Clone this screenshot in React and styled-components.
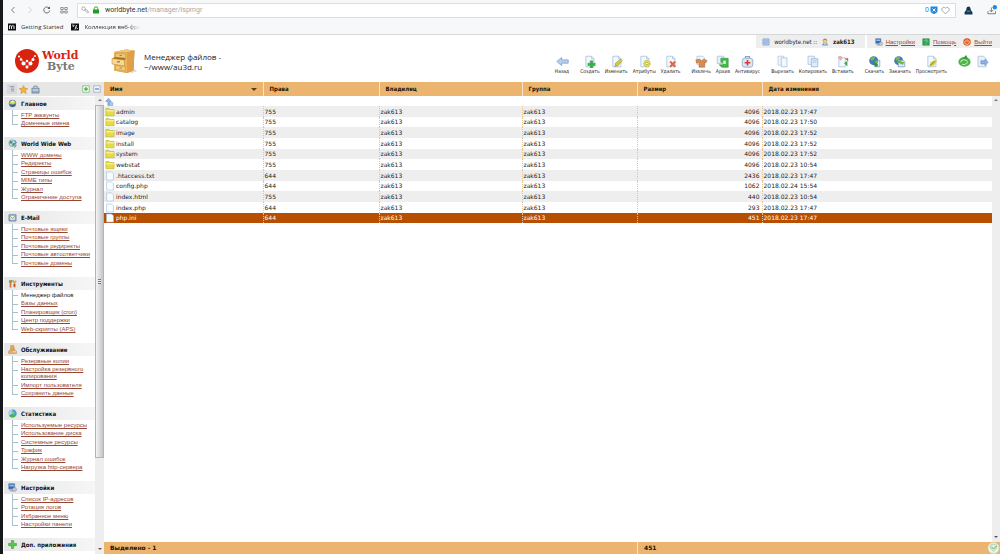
import styled, { createGlobalStyle, css } from 'styled-components'

const groups = [
  { title: 'Главное', icon: 'main', links: ['FTP аккаунты', 'Доменные имена'] },
  {
    title: 'World Wide Web',
    icon: 'web',
    links: ['WWW домены', 'Редиректы', 'Страницы ошибок', 'MIME типы', 'Журнал', 'Ограничение доступа'],
  },
  {
    title: 'E-Mail',
    icon: 'mail',
    links: ['Почтовые ящики', 'Почтовые группы', 'Почтовые редиректы', 'Почтовые автоответчики', 'Почтовые домены'],
  },
  {
    title: 'Инструменты',
    icon: 'tools',
    current: 'Менеджер файлов',
    links: ['Менеджер файлов', 'Базы данных', 'Планировщик (cron)', 'Центр поддержки', 'Web-скрипты (APS)'],
  },
  {
    title: 'Обслуживание',
    icon: 'service',
    links: ['Резервные копии', 'Настройка резервного копирования', 'Импорт пользователя', 'Сохранить данные'],
  },
  {
    title: 'Статистика',
    icon: 'stats',
    links: ['Используемые ресурсы', 'Использование диска', 'Системные ресурсы', 'Трафик', 'Журнал ошибок', 'Нагрузка http-сервера'],
  },
  {
    title: 'Настройки',
    icon: 'settings',
    links: ['Список IP-адресов', 'Ротация логов', 'Избранное меню', 'Настройки панели'],
  },
  { title: 'Доп. приложения', icon: 'plus', links: [] },
]

const actions = [
  [['Назад', 'back']],
  [['Создать', 'create'], ['Изменить', 'edit'], ['Атрибуты', 'attrs'], ['Удалить', 'remove']],
  [['Извлечь', 'extract'], ['Архив', 'archive'], ['Антивирус', 'antivirus']],
  [['Вырезать', 'cut'], ['Копировать', 'copy'], ['Вставить', 'paste']],
  [['Скачать', 'download'], ['Закачать', 'upload'], ['Просмотреть', 'view']],
]

const files = [
  ['folder', 'admin', 755, 4096, '2018.02.23 17:47'],
  ['folder', 'catalog', 755, 4096, '2018.02.23 17:50'],
  ['folder', 'image', 755, 4096, '2018.02.23 17:52'],
  ['folder', 'install', 755, 4096, '2018.02.23 17:52'],
  ['folder', 'system', 755, 4096, '2018.02.23 17:52'],
  ['folder', 'webstat', 755, 4096, '2018.02.23 10:54'],
  ['file', '.htaccess.txt', 644, 2436, '2018.02.23 17:47'],
  ['file', 'config.php', 644, 1062, '2018.02.24 15:54'],
  ['file', 'index.html', 755, 440, '2018.02.23 10:54'],
  ['file', 'index.php', 644, 293, '2018.02.23 17:47'],
  ['file', 'php.ini', 644, 451, '2018.02.23 17:47'],
]

const Sheet = () => (
  <path d="M3.5 1.5h7l3 3v10h-10z M10.5 1.5v3h3" fill="#f3f8fd" stroke="#a9c1dc" />
)

const Monitor = () => (
  <>
    <rect x="1" y="1" width="11" height="10" rx="1" fill="#3a68b8" stroke="#8a9ab4" />
    <path d="M2.5 3h8v3h-8z" fill="#8fc3f3" />
    <path d="M3 12h7v3H3z" fill="#a3acb8" />
    <circle cx="11.5" cy="11.5" r="3.5" fill="#c9cfd6" stroke="#6c87b0" />
    <circle cx="11.5" cy="11.5" r="1.3" fill="#ecc94b" />
  </>
)

const Globe = () => (
  <>
    <circle cx="7" cy="7" r="5.5" fill="#4179bd" />
    <path d="M3 4c2-3 5-2 6-1L7 6 4 7zM8 8l4-2c1 3-1 5-3 6z" fill="#6fbd45" />
  </>
)

const icons = {
  main: (
    <>
      <circle cx="8" cy="8" r="6.5" fill="#587c9f" />
      <path d="M2 8c1-6 10-8 12-1-3 3-8 3-12 1z" fill="#d8cf4a" />
      <path d="M5 4l4-2 2 3-4 2z" fill="#f7f4b8" />
      <path d="M4 12c3 2 7 1 9-2l-4 1z" fill="#2d4962" />
    </>
  ),
  web: (
    <>
      <circle cx="7.5" cy="7.5" r="6" fill="#bcd7ec" stroke="#5f8fb8" />
      <path d="M4 3l5 2-3 4-4-2zM9 7l4 1-3 5-3-2z" fill="#4d9a57" />
      <path d="M12 2l3 5-4 1M11 15l3-2v-3" fill="none" stroke="#3b7fc0" strokeWidth="1.5" />
    </>
  ),
  mail: (
    <>
      <rect x="1.5" y="2.5" width="13" height="12" rx="1" fill="#8ba6cd" stroke="#6582ad" />
      <path d="M4 5h8v7H4z" fill="#e8eef7" />
      <path d="M4 6l4 4 4-4" fill="none" stroke="#7d9c4c" strokeWidth="1.5" />
    </>
  ),
  tools: (
    <>
      <path d="M3 15V7L1 5l3-3 4 1v2L6 7v8z" fill="#c8793a" />
      <path d="M2 2h6v3H2z" fill="#7fa75b" />
      <path d="M10 15V7L8 4l2-3 1 3h2l1-3 1 4-2 2v8z" fill="#d6a63b" />
      <path d="M10 9h3v5h-3z" fill="#c24b34" />
    </>
  ),
  service: (
    <>
      <path d="M5 1h5l2 8H4z" fill="#e9a64a" stroke="#c98f42" />
      <path d="M1 11l4-2h6l4 2v4H1z" fill="#e0b07a" stroke="#bd8c56" />
      <path d="M9 12h5" stroke="#fff" />
    </>
  ),
  stats: (
    <>
      <circle cx="8" cy="8" r="7" fill="#6fb8e4" />
      <path d="M8 8V1a7 7 0 0 0-5 11z" fill="#a5d4ee" />
      <path d="M8 8l-6 4a7 7 0 0 0 11 1z" fill="#4fb04c" />
      <path d="M8 8V1a7 7 0 0 1 5 12z" fill="#4f9ad4" />
      <path d="M8 3l4 3-2 4-3-2z" fill="#7ccf62" />
    </>
  ),
  settings: <Monitor />,
  plus: <path d="M6 1h4v5h5v4h-5v5H6v-5H1V6h5z" fill="#55c848" stroke="#2e9b2a" />,
  back: <path d="M1 8l6-5v3h8v4H7v3z" fill="#b8d0ee" stroke="#7c9fcc" />,
  create: (
    <>
      <Sheet />
      <path d="M9 7h3v3h3v3h-3v3H9v-3H6v-3h3z" fill="#36b441" stroke="#1f8b2e" strokeWidth=".5" />
    </>
  ),
  edit: (
    <>
      <Sheet />
      <path d="M6 14l1-4 6-5 2 2-5 6z" fill="#d4cb3e" stroke="#8f8b28" strokeWidth=".7" />
    </>
  ),
  attrs: (
    <>
      <Sheet />
      <circle cx="11" cy="10.5" r="4" fill="#e4de5c" stroke="#b2ac31" strokeDasharray="2 1" />
      <circle cx="11" cy="10.5" r="1.5" fill="#fff" stroke="#b2ac31" />
    </>
  ),
  remove: (
    <>
      <Sheet />
      <path d="M7.5 8l6.5 6.5M14 8l-6.5 6.5" stroke="#e2653f" strokeWidth="2.5" />
    </>
  ),
  extract: (
    <>
      <path d="M2.5 1.5h7l2 2v8h-9z" fill="#f3f8fd" stroke="#a9c1dc" />
      <path d="M1 6l5-1 2 2 3-2 4 2-2 3-1-1v6H5V9L2 10z" fill="#d98b4f" stroke="#a9622c" strokeWidth=".6" />
    </>
  ),
  archive: (
    <>
      <path d="M1.5 1.5h8v9h-8z" fill="#e6f0fa" stroke="#a9c1dc" />
      <path d="M6 4h9v11H7l-3-3h5V9H6z" fill="#45ba4a" stroke="#278c33" strokeWidth=".7" />
      <path d="M9 7h3v4H9z" fill="#e9f8e6" />
    </>
  ),
  antivirus: (
    <>
      <path d="M5.5 4V2h5v2" fill="none" stroke="#8ba4c7" strokeWidth="1.5" />
      <rect x="1.5" y="4" width="13" height="11" rx="3" fill="#dbe7f5" stroke="#86a3cd" />
      <path d="M7 6h2v2.5h2.5v2H9V13H7v-2.5H4.5v-2H7z" fill="#dd3a2b" />
    </>
  ),
  cut: (
    <>
      <path d="M2.5 1.5h7v11h-7z" fill="#edf4fb" stroke="#b4cbe4" />
      <path d="M6.5 3.5h7v11h-7z" fill="#f3f8fd" stroke="#a9c1dc" />
    </>
  ),
  copy: (
    <>
      <path d="M2.5 1.5h8v10h-8z" fill="#edf4fb" stroke="#a9c1dc" />
      <path d="M6.5 4.5h8v10h-8z" fill="#e1edf9" stroke="#94b3d6" />
      <path d="M8 7h5M8 9h5" stroke="#a9c1dc" />
    </>
  ),
  paste: (
    <>
      <path d="M3.5 3.5h8v11h-8z" fill="#f3f8fd" stroke="#a9c1dc" />
      <path d="M2 3c2-3 5-2 6 0L6 7z" fill="#e6b1a4" />
      <path d="M10 10l4-3v7z" fill="#3cab49" />
      <path d="M11 4h4v4z" fill="#d94e42" />
    </>
  ),
  download: (
    <>
      <path d="M8.5 6.5h6v8h-6z" fill="#e6f0fa" stroke="#86a3cd" />
      <Globe />
      <path d="M7 8l5 3v3H8z" fill="#3c8d44" />
    </>
  ),
  upload: (
    <>
      <Globe />
      <path d="M6.5 6.5h6l2 2v6h-8z" fill="#dbe9f8" stroke="#7c9fcc" />
      <path d="M5 9l4-3 1 2 4 1-2 3z" fill="#74b33d" />
    </>
  ),
  view: (
    <>
      <Sheet />
      <path d="M5 14l2-5 5-3 3 1-4 6z" fill="#d4cb3e" />
      <path d="M6 13l6-5" stroke="#7b8a36" />
    </>
  ),
  refresh: (
    <>
      <ellipse cx="8" cy="8.5" rx="7.5" ry="6" fill="#4bb34a" />
      <path d="M6 4l4-4 2 5z" fill="#2f9a3a" />
      <path d="M3 9c2-4 6-4 9-1M5 11c2 1 5 1 7-2" fill="none" stroke="#bfe9b4" strokeWidth="1.3" />
    </>
  ),
  exit: (
    <>
      <path d="M2.5 1.5h7l3 3v10h-10z" fill="#e6effa" stroke="#a9c1dc" />
      <path d="M6 7h5V5l4 4-4 4v-2H6z" fill="#8fb0e0" stroke="#5681c4" strokeWidth=".6" />
    </>
  ),
  server: (
    <>
      <rect x="1.5" y="1.5" width="13" height="13" rx="1" fill="#a9c3e4" stroke="#86a3cd" />
      <path d="M2 5.5h12M2 9.5h12" stroke="#8dadd8" />
    </>
  ),
  user: (
    <>
      <path d="M2 15c0-4 3-5 6-5s6 1 6 5z" fill="#7e9fce" />
      <circle cx="8" cy="6" r="4" fill="#f3cf9b" stroke="#b08f4c" />
      <path d="M4 5c0-5 8-5 8 0l-4-1z" fill="#b08a3c" />
      <path d="M6.5 10h3L8 14z" fill="#fff" />
    </>
  ),
  help: (
    <>
      <path d="M1.5 1.5h13v13h-13z" fill="#2fa755" stroke="#1f8543" />
      <path d="M5 6c0-3 6-3 6 0 0 2-3 2-3 4M8 12v1.5" fill="none" stroke="#8fdca6" strokeWidth="1.5" />
    </>
  ),
  power: (
    <>
      <circle cx="8" cy="8" r="7.5" fill="#e25a20" />
      <path d="M5 5a4.5 4.5 0 1 0 6 0M8 3v5" fill="none" stroke="#ffe6d6" strokeWidth="1.5" />
    </>
  ),
  folder: (
    <>
      <path d="M1.5 2.5h5l1 1.5h7v10h-13z" fill="#e5dd45" stroke="#b8b033" />
      <path d="M2 6h12" stroke="#f6f3a0" strokeWidth="2" />
    </>
  ),
  file: <path d="M2.5 1.5h8l3 3v10h-11z" fill="#f8fbff" stroke="#a5bfdf" />,
  up: (
    <>
      <path d="M5 15V8H1l5-6 5 6H8v7z" fill="#8db8e6" stroke="#6a95c8" />
      <path d="M8 8h3v2h3v5H8z" fill="#a9c8ea" stroke="#7da2cf" />
    </>
  ),
  tree: <path d="M3 3h9M6 6h6M6 9h6M6 12h6" stroke="#65707c" fill="none" />,
  star: <path d="M8 1l2.2 4.8 5.3.6-4 3.6 1.2 5.3L8 12.6l-4.7 2.7L4.5 10l-4-3.6 5.3-.6z" fill="#f3b43a" stroke="#cf8d20" />,
  home: (
    <>
      <path d="M5 5V2h6v3" fill="none" stroke="#6d8196" strokeWidth="1.5" />
      <path d="M1.5 5.5h13v9h-13z" fill="#8ea3ba" stroke="#6d8196" />
      <path d="M3 7h10v4H3z" fill="#b8cadb" />
    </>
  ),
  expand: (
    <>
      <path d="M1.5 1.5h13v13h-13z" fill="#effbec" stroke="#3fa53c" />
      <path d="M8 4v8M4 8h8" stroke="#2f9a2c" strokeWidth="2" />
    </>
  ),
  collapse: (
    <>
      <path d="M1.5 1.5h13v13h-13z" fill="#f2f5fb" stroke="#6d86ad" />
      <path d="M4 8h8" stroke="#4b6795" strokeWidth="2" />
    </>
  ),
  goBack: <path d="M11 2L5 8l6 6" fill="none" stroke="#555" strokeWidth="1.5" />,
  goNext: <path d="M5 2l6 6-6 6" fill="none" stroke="#c4c6c9" strokeWidth="1.5" />,
  reload: (
    <>
      <path d="M13.5 9A6 6 0 1 1 12 4" fill="none" stroke="#555" strokeWidth="1.7" />
      <path d="M14 1v5H9z" fill="#555" />
    </>
  ),
  grid: <path d="M1.5 3h5v4h-5zM9.5 3h5v4h-5zM1.5 10h5v4h-5zM9.5 10h5v4h-5z" fill="none" stroke="#666" strokeWidth="1.3" />,
  key: (
    <>
      <circle cx="5" cy="5" r="3.5" fill="none" stroke="#888" strokeWidth="1.3" />
      <path d="M7 8l6 6 2-1-1-3-6-4" fill="none" stroke="#888" strokeWidth="1.3" />
    </>
  ),
  lock: (
    <>
      <path d="M4.5 8V5a3.5 3.5 0 0 1 7 0v3" fill="none" stroke="#1ea01e" strokeWidth="1.8" />
      <path d="M2 7h12v8H2z" fill="#1ea01e" />
    </>
  ),
  shield: (
    <>
      <path d="M1 1h14v9c0 3-4 5-7 6-3-1-7-3-7-6z" fill="#2484dc" />
      <path d="M5 5l6 6M11 5l-6 6" stroke="#fff" strokeWidth="2" />
    </>
  ),
  heart: <path d="M8 14L2 8c-2-3 2-8 6-4 4-4 8 1 6 4z" fill="none" stroke="#888" strokeWidth="1.3" />,
  spy: (
    <>
      <path d="M4 7c0-8 8-8 8 0l3 4v4H1v-4z" fill="#173450" />
      <path d="M5 8h6v3H5z" fill="#2c7d8f" />
    </>
  ),
  save: (
    <>
      <path d="M7 4v7M4 8l3 3 3-3M1.5 10v4h12v-4" fill="none" stroke="#666" strokeWidth="1.3" />
      <circle cx="12.5" cy="3.5" r="3.5" fill="#1f8be0" />
    </>
  ),
  medium: (
    <>
      <path d="M0 1h16v14H0z" fill="#111" />
      <path d="M3 12V5M3 6c2-1 4-1 4 1v5M7 7c2-2 5-2 5 0v5" fill="none" stroke="#fff" strokeWidth="1.8" />
    </>
  ),
  opera: (
    <>
      <path d="M0 1h16v14H0z" fill="#111" />
      <path d="M4 3v4l3-2M11 4l-3 9M11 9l2 3" fill="none" stroke="#fff" strokeWidth="1.8" />
    </>
  ),
}

const Icon = ({ name, size = 8 }) => (
  <Picture viewBox="0 0 16 16" $size={size} aria-hidden="true">
    {icons[name]}
  </Picture>
)

const Logo = () => (
  <LogoMark viewBox="0 0 48 48" aria-hidden="true">
    <circle cx="24" cy="24" r="24" fill="#d8230f" />
    <path d="M11 17l7 12 6-5 7 5 7-14M18 29l6 6 7-6" fill="none" stroke="#fff" strokeWidth="1" />
    <g fill="#fff">
      <circle cx="8" cy="15" r="2" />
      <circle cx="12" cy="21" r="2.5" />
      <circle cx="17" cy="29" r="4" />
      <circle cx="24" cy="24" r="2.5" />
      <circle cx="24" cy="36" r="3" />
      <circle cx="31" cy="29" r="4" />
      <circle cx="36" cy="21" r="3" />
      <circle cx="40" cy="14" r="2" />
    </g>
  </LogoMark>
)

const Cabinet = () => (
  <CabinetArt viewBox="0 0 52 50" aria-hidden="true">
    <path d="M40 44l9-3 3 4-14 4z" fill="#ddd" />
    <path d="M6 6L30 1l17 2-2 40-13 5-26-5z" fill="#c98a35" />
    <path d="M6 6L30 1l17 2-15 4z" fill="#f0c679" />
    <path d="M32 7l15-4-2 40-13 5z" fill="#dfa049" />
    <path d="M6 6l26 1v41L6 43z" fill="#eab45b" />
    <path d="M9 9l20 1v9L9 17zM9 33l20 2v9L9 41z" fill="#f2c977" stroke="#c48c3c" />
    <path d="M2 19l25 3v12L2 30z" fill="#f8d98f" stroke="#b98033" />
    <path d="M2 19l6-3 22 2-3 4z" fill="#a87430" />
    <path d="M12 24h6v3h-6zM17 12h5v2h-5zM17 37h5v2h-5z" fill="#8f8778" />
  </CabinetArt>
)

export default function App() {
  return (
    <Page>
      <GlobalStyle />
      <Browser>
        <AddressRow>
          <NavButton aria-label="back"><Icon name="goBack" /></NavButton>
          <NavButton aria-label="forward"><Icon name="goNext" /></NavButton>
          <NavButton aria-label="reload"><Icon name="reload" /></NavButton>
          <NavButton aria-label="speed dial"><Icon name="grid" /></NavButton>
          <Address>
            <Icon name="key" />
            <Icon name="lock" />
            <Url><b>worldbyte.net</b>/manager/ispmgr</Url>
            <Blocked>0</Blocked>
            <Icon name="shield" />
            <Icon name="heart" size={9} />
          </Address>
          <BrowserTools>
            <Icon name="spy" size={9} />
            <Icon name="save" size={10} />
          </BrowserTools>
        </AddressRow>
        <Bookmarks>
          <Bookmark href="#"><Icon name="medium" />Getting Started</Bookmark>
          <Bookmark href="#" $fade><Icon name="opera" />Коллекция веб-фра</Bookmark>
        </Bookmarks>
      </Browser>

      <Header>
        <Brand>
          <Logo />
          <BrandName>World<span>Byte</span></BrandName>
        </Brand>
        <Cabinet />
        <Title>Менеджер файлов - ~/www/au3d.ru</Title>
        <HeaderSide>
          <Account>
            <AccountCell>
              <Icon name="server" />
              <span>worldbyte.net ::</span>
              <Icon name="user" />
              <b>zak613</b>
            </AccountCell>
            <AccountCell $links>
              <AccountLink href="#"><Icon name="settings" /><u>Настройки</u></AccountLink>
              <AccountLink href="#"><Icon name="help" /><u>Помощь</u></AccountLink>
              <AccountLink href="#"><Icon name="power" /><u>Выйти</u></AccountLink>
            </AccountCell>
          </Account>
          <Toolbar>
            {actions.map((group, i) => (
              <ToolGroup key={i}>
                {group.map(([label, icon]) => (
                  <Tool key={label}>
                    <Icon name={icon} size={13} />
                    {label}
                  </Tool>
                ))}
              </ToolGroup>
            ))}
            <ToolGroup>
              <Tool aria-label="Обновить"><Icon name="refresh" size={13} /></Tool>
              <Tool aria-label="Выход"><Icon name="exit" size={13} /></Tool>
            </ToolGroup>
          </Toolbar>
        </HeaderSide>
      </Header>

      <Main>
        <Sidebar>
          <SideTools>
            <SideTool aria-label="Дерево" $pressed><Icon name="tree" /></SideTool>
            <SideTool aria-label="Избранное"><Icon name="star" size={9} /></SideTool>
            <SideTool aria-label="Домой"><Icon name="home" size={9} /></SideTool>
            <Spacer />
            <SideTool aria-label="Развернуть"><Icon name="expand" /></SideTool>
            <SideTool aria-label="Свернуть"><Icon name="collapse" /></SideTool>
          </SideTools>
          <SideBody>
            <Menu>
              {groups.map(({ title, icon, links, current }) => (
                <section key={title}>
                  <GroupTitle><Icon name={icon} size={9} />{title}</GroupTitle>
                  <Links>
                    {links.map(link => (
                      <LinkItem key={link}>
                        {link === current ? <span>{link}</span> : <a href="#">{link}</a>}
                      </LinkItem>
                    ))}
                  </Links>
                </section>
              ))}
            </Menu>
            <ScrollTrack>
              <Arrow $up />
              <Thumb />
              <Spacer />
              <Arrow />
            </ScrollTrack>
          </SideBody>
        </Sidebar>

        <Content>
          <ListArea>
            <Files>
              <colgroup>
                <col width="159" />
                <col width="116" />
                <col width="143" />
                <col width="115" />
                <col width="125" />
                <col />
              </colgroup>
              <thead>
                <tr>
                  <th><HeadCell>Имя<SortMark /></HeadCell></th>
                  <th>Права</th>
                  <th>Владелец</th>
                  <th>Группа</th>
                  <th>Размер</th>
                  <th>Дата изменения</th>
                </tr>
              </thead>
              <tbody>
                <UpRow>
                  <td colSpan="6"><Icon name="up" size={9} /></td>
                </UpRow>
                {files.map(([type, name, mode, size, date]) => (
                  <FileRow key={name} $selected={name === 'php.ini'}>
                    <td><FileName><Icon name={type} size={10} />{name}</FileName></td>
                    <td>{mode}</td>
                    <td>zak613</td>
                    <td>zak613</td>
                    <SizeCell>{size}</SizeCell>
                    <td>{date}</td>
                  </FileRow>
                ))}
              </tbody>
            </Files>
            <ListTrack>
              <TrackHead />
              <Arrow $up />
              <Spacer />
              <Arrow />
            </ListTrack>
          </ListArea>
          <Summary>
            <SummaryCount>Выделено - 1</SummaryCount>
            <SummarySize>451</SummarySize>
            <Badge viewBox="0 0 24 24" aria-hidden="true">
              <circle cx="12" cy="12" r="11" fill="#eef3e4" stroke="#d5dccb" />
              <path d="M6 6l6-2 6 2v6l-6 7-6-7z" fill="#dcefd7" stroke="#86b88a" />
              <path d="M8 10l4 4 6-6" fill="none" stroke="#68b26b" strokeWidth="2" />
            </Badge>
          </Summary>
        </Content>
      </Main>
    </Page>
  )
}

const GlobalStyle = createGlobalStyle`
  * {
    box-sizing: border-box;
  }
  body {
    margin: 0;
    background: #ffffff;
  }
  button {
    border: 0;
    padding: 0;
    background: none;
    font: inherit;
    color: inherit;
  }
`

const Page = styled.div`
  display: flex;
  flex-direction: column;
  height: 100vh;
  overflow: hidden;
  border-left: 3px solid #16181b;
  color: #222222;
  font: 6px/8px 'DejaVu Sans Condensed', 'DejaVu Sans', sans-serif;
`

const Picture = styled.svg`
  display: block;
  flex: none;
  width: ${p => p.$size}px;
  height: ${p => p.$size}px;
`

const Spacer = styled.div`
  flex: 1;
`

const Browser = styled.header`
  flex: none;
  background: #f6f8fa;
  border-bottom: 1px solid #d6d8da;
  font-family: 'Open Sans', sans-serif;
`

const AddressRow = styled.div`
  display: flex;
  align-items: center;
  height: 20px;
  padding-left: 6px;
`

const NavButton = styled.button`
  width: 9px;
  margin-right: 8px;
`

const Address = styled.div`
  display: flex;
  flex: 1;
  align-items: center;
  gap: 3px;
  height: 15px;
  padding: 0 5px 0 3px;
  background: #ffffff;
  border: 1px solid #dcdee0;
  font: 7px/9px Roboto, sans-serif;
`

const Url = styled.span`
  flex: 1;
  padding-left: 2px;
  color: #a3a6a9;
  b {
    font-weight: normal;
    color: #333333;
  }
`

const Blocked = styled.span`
  margin-right: -2px;
  color: #1f8be0;
`

const BrowserTools = styled.div`
  display: flex;
  align-items: center;
  gap: 14px;
  padding: 0 3px 0 8px;
`

const Bookmarks = styled.nav`
  display: flex;
  gap: 8px;
  height: 14px;
  padding-left: 5px;
`

const Bookmark = styled.a`
  display: flex;
  align-items: center;
  gap: 5px;
  color: #333333;
  text-decoration: none;
  ${p => p.$fade && css`
    mask-image: linear-gradient(to right, #000000 80%, transparent);
  `}
`

const Header = styled.div`
  display: flex;
  flex: none;
  height: 47px;
`

const Brand = styled.div`
  display: flex;
  align-items: center;
  gap: 3px;
  width: 108px;
  padding: 4px 0 0 12px;
`

const LogoMark = styled.svg`
  width: 24px;
  height: 24px;
`

const BrandName = styled.div`
  color: #d8230f;
  font: bold 11px/11px 'DejaVu Serif', serif;
  span {
    display: block;
    padding-left: 5px;
    color: #777777;
  }
`

const CabinetArt = styled.svg`
  align-self: center;
  width: 26px;
  height: 25px;
  margin-top: 5px;
`

const Title = styled.h1`
  align-self: center;
  width: 90px;
  margin: 7px 0 0 7px;
  font: 8px/10px 'Open Sans', sans-serif;
`

const HeaderSide = styled.div`
  display: flex;
  flex: 1;
  flex-direction: column;
  align-items: flex-end;
`

const Account = styled.div`
  display: flex;
  gap: 2px;
`

const AccountCell = styled.div`
  display: flex;
  align-items: center;
  gap: 4px;
  height: 13px;
  padding: 0 10px 0 6px;
  background: #eeeeee;
  ${p => p.$links && css`
    gap: 7px;
    padding: 0 8px;
    font-family: 'Liberation Sans', sans-serif;
  `}
`

const AccountLink = styled.a`
  display: flex;
  align-items: center;
  gap: 3px;
  color: #a04a35;
  text-decoration: none;
`

const Toolbar = styled.div`
  display: flex;
  gap: 11px;
  padding: 7px 11px 0 0;
`

const ToolGroup = styled.div`
  display: flex;
  align-items: flex-start;
  gap: 5px;
`

const Tool = styled.button`
  display: flex;
  flex-direction: column;
  align-items: center;
  font-size: 5px;
  line-height: 7px;
`

const Main = styled.div`
  display: flex;
  flex: 1;
  min-height: 0;
`

const Sidebar = styled.aside`
  display: flex;
  flex: none;
  flex-direction: column;
  width: 101px;
`

const SideTools = styled.div`
  display: flex;
  flex: none;
  align-items: center;
  gap: 1px;
  height: 14px;
  padding: 0 2px 0 4px;
  background: #e6e6e6;
`

const SideTool = styled.button`
  padding: 1px;
  background: ${p => (p.$pressed ? '#d6dade' : 'none')};
`

const SideBody = styled.div`
  display: flex;
  flex: 1;
  min-height: 0;
`

const Menu = styled.nav`
  flex: 1;
  overflow: hidden;
  padding: 1px 0 0 1px;
`

const GroupTitle = styled.h2`
  display: flex;
  align-items: center;
  gap: 4px;
  height: 13px;
  margin: 0;
  padding-left: 4px;
  background: linear-gradient(to right, #e6e6e6, #f6f6f6);
  color: #111111;
  font-size: 6px;
`

const Links = styled.ul`
  margin: 0;
  padding: 0 0 10px 8px;
  font-family: 'Liberation Sans', sans-serif;
  list-style: none;
`

const LinkItem = styled.li`
  padding: 1px 4px 0 9px;
  background:
    linear-gradient(#a9c0c8, #a9c0c8) 0 0 / 1px 100% no-repeat,
    linear-gradient(#a9c0c8, #a9c0c8) 0 5px / 6px 1px no-repeat;
  line-height: 7px;
  &:nth-child(odd) {
    padding-top: 2px;
  }
  &:last-child {
    background-size: 1px 5px, 6px 1px;
  }
  a {
    color: #984632;
  }
`

const ScrollTrack = styled.div`
  display: flex;
  flex-direction: column;
  width: 9px;
  background: #eeeeee;
`

const Thumb = styled.div`
  display: flex;
  flex: none;
  align-items: center;
  justify-content: center;
  height: 77%;
  border: 1px solid #b4b4b8;
  background: linear-gradient(to right, #f4f4f5, #c4c5c9);
  &::after {
    content: '';
    width: 3px;
    height: 5px;
    background: repeating-linear-gradient(#777777 0 1px, #eeeeee 1px 2px);
  }
`

const Arrow = styled.div`
  height: 9px;
  padding-top: 3px;
  &::before {
    content: '';
    display: block;
    width: 0;
    margin: 0 auto;
    border: 2px solid transparent;
    border-top: ${p => (p.$up ? '0' : '2px solid #555555')};
    border-bottom: ${p => (p.$up ? '2px solid #777777' : '0')};
  }
`

const Content = styled.main`
  display: flex;
  flex: 1;
  flex-direction: column;
  min-width: 0;
  font-family: 'DejaVu Sans', sans-serif;
`

const ListArea = styled.div`
  display: flex;
  flex: 1;
  align-items: flex-start;
  min-height: 0;
`

const Files = styled.table`
  flex: 1;
  width: 100%;
  border-collapse: collapse;
  table-layout: fixed;
  th {
    height: 14px;
    padding: 0 6px;
    background: #ebb46f;
    color: #221100;
    font: bold 6px/8px 'DejaVu Sans Condensed', sans-serif;
    text-align: left;
  }
  th + th {
    border-left: 1px solid #f8e3c8;
  }
`

const HeadCell = styled.div`
  display: flex;
  align-items: center;
  justify-content: space-between;
`

const SortMark = styled.i`
  border: 3px solid transparent;
  border-top-color: #5c3a10;
  border-bottom: 0;
`

const UpRow = styled.tr`
  td {
    height: 10px;
    padding: 0 1px;
  }
`

const FileRow = styled.tr`
  height: 11px;
  background: ${p => (p.$selected ? '#b84f00' : '#ffffff')};
  color: ${p => (p.$selected ? '#ffffff' : '#222222')};
  &:nth-child(3n) {
    height: 10px;
  }
  &:nth-child(even) {
    background: ${p => (p.$selected ? '#b84f00' : '#eeeeee')};
  }
  td {
    padding: 0 2px 0 1px;
  }
  td + td {
    border-left: 1px dotted #e3c59c;
  }
`

const FileName = styled.div`
  display: flex;
  align-items: center;
  gap: 1px;
`

const SizeCell = styled.td`
  text-align: right;
`

const ListTrack = styled.div`
  display: flex;
  flex: none;
  flex-direction: column;
  align-self: stretch;
  width: 8px;
  background: #eeeeee;
`

const TrackHead = styled.div`
  height: 14px;
  background: #ebb46f;
`

const Summary = styled.footer`
  display: flex;
  flex: none;
  align-items: center;
  height: 12px;
  background: #ebb46f;
  color: #221100;
  font-weight: bold;
`

const SummaryCount = styled.div`
  width: 533px;
  padding-left: 6px;
`

const SummarySize = styled.div`
  flex: 1;
  padding: 2px 6px;
  border-left: 1px solid #f8e3c8;
`

const Badge = styled.svg`
  width: 13px;
  height: 12px;
`
